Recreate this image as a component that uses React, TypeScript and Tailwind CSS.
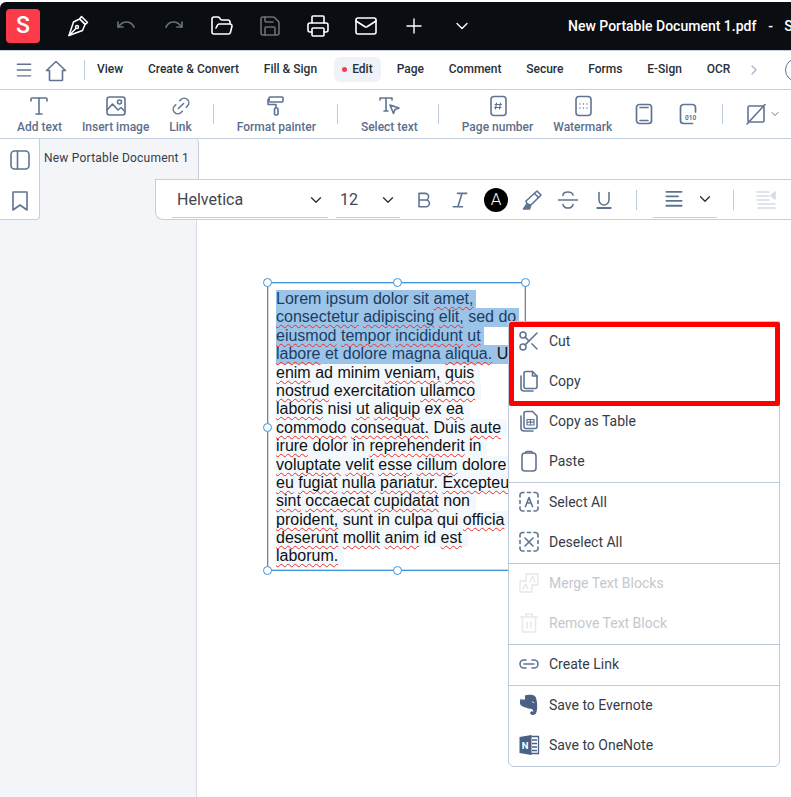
import React from 'react';
import {
  ChevronDown,
  ChevronRight,
  FolderOpen,
  Mail,
  Menu,
  Plus,
  Printer,
  Save,
  Scissors,
  Type,
  Link2,
} from 'lucide-react';

const slate = '#5f7492';

const Svg: React.FC<{ size?: number; color?: string; width?: number; children: React.ReactNode }> = ({
  size = 24,
  color = slate,
  width = 1.6,
  children,
}) => (
  <svg width={size} height={size} viewBox="0 0 24 24" fill="none" stroke={color} strokeWidth={width} strokeLinecap="round" strokeLinejoin="round">
    {children}
  </svg>
);

const NibIcon = () => (
  <Svg color="#ffffff" width={1.5}>
    <path d="M15.500 2.500l6 6-2.200 1.800-5.600-5.600zM13.500 5l5.500 5.500-2.500 6L3 21.500l4.500-13.500z" />
    <path d="M3 21.500l6.800-7" />
    <circle cx="11" cy="13" r="1.500" />
  </Svg>
);

const HomeOutline = () => (
  <Svg width={1.6}>
    <path d="M12 2.500L2.500 11.500h3V21a.5.5 0 0 0 .5.500h12a.5.5 0 0 0 .5-.5v-9.500h3z" />
  </Svg>
);

const UndoIcon = ({ flip }: { flip?: boolean }) => (
  <span className={flip ? '-scale-x-100' : ''}>
    <Svg color="#6b6f76" width={1.7}>
      <path d="M4 8v5h5" />
      <path d="M4.500 13C7 9 10 8 12.500 8c3.500 0 6 2 7.500 5" />
    </Svg>
  </span>
);

const ImageIcon = () => (
  <Svg>
    <rect x="3" y="3" width="18" height="18" rx="2.500" />
    <circle cx="15.500" cy="8" r="2" />
    <path d="M3 16l5.500-6 5.500 6 3-2.500 4 4" />
  </Svg>
);

const RollerIcon = () => (
  <Svg>
    <rect x="5" y="3" width="14" height="5" rx="1" />
    <path d="M5 5.500H4v5h8v3" />
    <rect x="10.500" y="14" width="3.500" height="7" rx="1" />
  </Svg>
);

const SelectTextIcon = () => (
  <Svg>
    <path d="M3 6V4h12v2M9 4v13M7 17h4" />
    <path d="M13 11l9 3-4 1.500-1.500 4z" />
  </Svg>
);

const PageNumberIcon = () => (
  <Svg>
    <rect x="5" y="2.500" width="15" height="19" rx="3" />
    <path d="M10.500 9l-1 6M14.500 9l-1 6M9 10.500h6.500M8.500 13.500h6.500" strokeWidth="1.200" />
  </Svg>
);

const WatermarkIcon = () => (
  <Svg>
    <rect x="5" y="2.500" width="15" height="19" rx="3" />
    <path d="M9 10h.01M12.500 10h.01M16 10h.01M9 14h.01M12.500 14h.01M16 14h.01" strokeWidth="1.400" />
  </Svg>
);

const PhoneIcon = () => (
  <Svg width={1.7}>
    <rect x="4.500" y="2.500" width="15" height="19" rx="3" />
    <path d="M8 5.500h8M8 18.500h8" />
  </Svg>
);

const BinaryIcon = () => (
  <Svg width={1.7}>
    <path d="M15.500 2.500H7.500a3 3 0 0 0-3 3v13a3 3 0 0 0 3 3H16.500M19.500 10V5.500a3 3 0 0 0-3-3" />
    <text x="9" y="18" fontSize="6.500" fontWeight="700" fill={slate} stroke="none" fontFamily="Roboto, sans-serif">010</text>
  </Svg>
);

const NoFillIcon = () => (
  <Svg>
    <rect x="4" y="4" width="16" height="16" rx="1.500" />
    <path d="M21 2.500L3 22" />
  </Svg>
);

const PanelIcon = () => (
  <Svg>
    <rect x="3" y="3" width="18" height="18" rx="3.500" />
    <path d="M9.500 3v18" />
  </Svg>
);

const BookmarkIcon = () => (
  <Svg>
    <path d="M5 3h14v18l-7-5-7 5z" />
  </Svg>
);

const BoldIcon = () => (
  <Svg size={20} width={1.900}>
    <path d="M6 4h7.500a4 4 0 0 1 0 8H6zM6 12h8.500a4 4 0 0 1 0 8H6z" />
  </Svg>
);

const ItalicIcon = () => (
  <Svg size={20} width={1.900}>
    <path d="M9 4h11M4 20h11M14.500 4l-5 16" />
  </Svg>
);

const HighlightIcon = () => (
  <Svg>
    <path d="M17 3l4 4-10 10-4-1-1-3z" />
    <path d="M14.500 5.500l4 4" />
    <path d="M7 16l-3.500 5h6l1-3z" fill={slate} />
  </Svg>
);

const StrikeIcon = () => (
  <Svg>
    <path d="M2.500 12h19" />
    <path d="M17 7c-.5-2-2.500-3-5-3s-5 1-5 3.500M7 16.500C7.500 19 9.500 20 12 20s4.500-1 5-3.500" />
  </Svg>
);

const UnderlineIcon = () => (
  <Svg size={20} width={1.900}>
    <path d="M6 3v9a6 6 0 0 0 12 0V3" />
    <path d="M4 21.500h16" strokeWidth="2.400" />
  </Svg>
);

const AlignIcon = () => (
  <Svg width={2}>
    <path d="M3.500 4h17M3.500 9h13M3.500 14h17M3.500 19.500h17" />
  </Svg>
);

const IndentIcon = () => (
  <Svg color="#d5dbe4" width={1.500}>
    <path d="M3 4h12M3 8h12M3 12h12M4 16h17M4 20h17" />
    <path d="M21 4v7l-4-3.500z" fill="#d5dbe4" />
  </Svg>
);

const CopyIcon = () => (
  <Svg>
    <path d="M9 2.500h6.500L20 7v10.500a2 2 0 0 1-2 2H9a2 2 0 0 1-2-2v-13a2 2 0 0 1 2-2z" />
    <path d="M15.500 2.500V7H20" />
    <path d="M4 7v12a3 3 0 0 0 3 3h9" />
  </Svg>
);

const CopyTableIcon = () => (
  <Svg>
    <path d="M9 2.500h6.500L20 7v10.500a2 2 0 0 1-2 2H9a2 2 0 0 1-2-2v-13a2 2 0 0 1 2-2z" />
    <path d="M4 7v12a3 3 0 0 0 3 3h9" />
    <path d="M10 10.500h7v5.500h-7zM13.500 10.500V16M10 13.200h7" strokeWidth="1.200" />
  </Svg>
);

const PasteIcon = () => (
  <Svg>
    <rect x="5" y="4" width="14" height="18" rx="3" />
    <path d="M8.500 4c0-1 .5-1.500 1.500-1.500h4c1 0 1.500.5 1.500 1.500" />
  </Svg>
);

const DashedBox: React.FC<{ children: React.ReactNode }> = ({ children }) => (
  <Svg>
    <path d="M3 7V5a2.500 2.500 0 0 1 2.500-2.500H7M10.500 2.500h3M17 2.500h1.500A2.500 2.500 0 0 1 21 5v2M21 10.500v3M21 17v1.500a2.500 2.500 0 0 1-2.500 2.500H17M13.500 21h-3M7 21H5.500A2.500 2.500 0 0 1 3 18.500V17M3 13.500v-3" />
    {children}
  </Svg>
);

const MergeIcon = () => (
  <Svg color="#e3e7ec" width={1.300}>
    <path d="M9 3h12v11h-6v7H3V10h6z" />
    <path d="M13 11l2.500-6 2.500 6M6 18l2.500-5 2.500 5" />
  </Svg>
);

const TrashIcon = () => (
  <Svg color="#e6e9ee">
    <path d="M3.500 6h17M9 6V3h6v3M5.500 6v15h13V6M10 11v6M14 11v6" />
  </Svg>
);

const EvernoteIcon = () => (
  <svg width="24" height="24" viewBox="0 0 24 24">
    <path
      fill="#4a6185"
      d="M8 2.500C10 1.500 13 1.500 15.500 2c2.500.5 3.500 2 3.800 4 1.200 4.500 1.200 9.500.2 13-.6 2.200-2.300 3.300-4.300 3-1.700-.3-2.500-1.800-1.800-3 .6-1 2.200-1 2.800 0 .3-1.200-.5-3-2.200-3.200-1.500-.2-3.500 0-5-1.300C7 14.500 6.500 13.500 5 13 3.500 12.500 2.800 11 3 9l.3-3 3.700-.5z"
    />
    <path d="M8 3v3.500H3.500z" fill="#ffffff" />
    <path d="M15 8.500c1 0 2 .5 2.300 1.500-1 0-1.800-.3-2.300-1.500z" fill="#ffffff" />
  </svg>
);

const OneNoteIcon = () => (
  <svg width="24" height="24" viewBox="0 0 24 24">
    <path d="M13 3.500h8.500v17H13z" fill="none" stroke="#4a6185" strokeWidth="1.300" />
    <path d="M15 7h5M15 10.500h5M15 14h5M15 17.500h5" stroke="#4a6185" strokeWidth="1.600" />
    <path d="M2.500 4l12-2v20l-12-2z" fill="#4a6185" />
    <text x="4.800" y="15.500" fontSize="9.500" fontWeight="700" fill="#ffffff" fontFamily="Roboto, sans-serif">N</text>
  </svg>
);

const navItems = ['View', 'Create & Convert', 'Fill & Sign', 'Edit', 'Page', 'Comment', 'Secure', 'Forms', 'E-Sign', 'OCR'];

const ToolButton: React.FC<{ label: string; icon: React.ReactNode }> = ({ label, icon }) => (
  <div className="flex flex-col items-center gap-px">
    <div className="h-6 flex items-center justify-center">{icon}</div>
    <span className="text-xs leading-[16px] font-medium text-[#5c6f8b] whitespace-nowrap">{label}</span>
  </div>
);

const Sep = ({ className = '' }: { className?: string }) => <div className={`w-px h-5 bg-[#bccadb] shrink-0 ${className}`} />;

// words with a ~ get the red spell check line
const docLines: { text: string; sel?: boolean; rest?: string }[] = [
  { text: 'Lorem ipsum dolor sit ~amet,', sel: true },
  { text: '~consectetur ~adipiscing ~elit, sed do', sel: true },
  { text: '~eiusmod ~tempor ~incididunt ~ut', sel: true },
  { text: '~labore et dolore magna ~aliqua. ', sel: true, rest: 'Ut' },
  { text: '~enim ad minim ~veniam, ~quis' },
  { text: '~nostrud exercitation ~ullamco' },
  { text: '~laboris nisi ~ut ~aliquip ex ~ea' },
  { text: '~commodo ~consequat. Duis ~aute' },
  { text: '~irure dolor in ~reprehenderit in' },
  { text: '~voluptate ~velit ~esse ~cillum dolore' },
  { text: '~eu ~fugiat ~nulla ~pariatur. ~Excepteur' },
  { text: '~sint ~occaecat ~cupidatat non' },
  { text: '~proident, sunt in culpa qui ~officia' },
  { text: '~deserunt ~mollit ~anim id ~est' },
  { text: '~laborum.' },
];

const Words: React.FC<{ text: string }> = ({ text }) => (
  <>
    {text.split(' ').map((word, i, all) => (
      <React.Fragment key={i}>
        {word.startsWith('~') ? (
          <span className="underline decoration-wavy decoration-[#ef2f22] decoration-[1.3px] underline-offset-2 [text-decoration-skip-ink:none]">
            {word.slice(1)}
          </span>
        ) : (
          word
        )}
        {i < all.length - 1 ? ' ' : ''}
      </React.Fragment>
    ))}
  </>
);

const Handle = ({ className }: { className: string }) => (
  <span className={`absolute w-[9px] h-[9px] rounded-full bg-white border border-[#3f93d8] ${className}`} />
);

const MenuItem: React.FC<{ label: string; icon: React.ReactNode; disabled?: boolean }> = ({ label, icon, disabled }) => (
  <div className="h-10 flex items-center pl-2 gap-2 pb-[2px]">
    <div className="w-6 h-6 flex items-center justify-center shrink-0">{icon}</div>
    <span className={`text-sm ${disabled ? 'text-[#c4c8ce]' : 'text-[#363c47]'}`}>{label}</span>
  </div>
);

const MenuLine = () => <div className="h-px bg-[#bccadb]" />;

export default function App() {
  return (
    <div className="w-[791px] h-[797px] overflow-hidden bg-white flex flex-col font-['Roboto',sans-serif]">
      {/* title bar */}
      <div className="mt-[2px] h-[48px] shrink-0 bg-[#0a0d12] rounded-tl-md flex items-center">
        <div className="ml-[6px] w-[34px] h-[34px] shrink-0 rounded bg-[#fd3a4a] flex items-center justify-center text-white text-[23px] font-medium">S</div>
        <div className="ml-[14px] flex items-center shrink-0">
          <div className="w-12 flex justify-center"><NibIcon /></div>
          <div className="w-12 flex justify-center"><UndoIcon /></div>
          <div className="w-12 flex justify-center"><UndoIcon flip /></div>
          <div className="w-12 flex justify-center"><FolderOpen size={24} color="#ffffff" strokeWidth={1.6} /></div>
          <div className="w-12 flex justify-center"><Save size={24} color="#6b6f76" strokeWidth={1.6} /></div>
          <div className="w-12 flex justify-center"><Printer size={24} color="#ffffff" strokeWidth={1.6} /></div>
          <div className="w-12 flex justify-center"><Mail size={24} color="#ffffff" strokeWidth={1.6} /></div>
          <div className="w-12 flex justify-center"><Plus size={24} color="#ffffff" strokeWidth={1.4} /></div>
          <div className="w-12 flex justify-center"><ChevronDown size={20} color="#ffffff" strokeWidth={1.6} /></div>
        </div>
        <span className="ml-[82px] shrink-0 text-sm font-medium text-white whitespace-nowrap">New Portable Document 1.pdf</span>
        <span className="ml-[12px] shrink-0 text-sm font-medium text-white">-</span>
        <span className="ml-[11px] shrink-0 text-sm font-medium text-white">S</span>
      </div>

      {/* menu tabs */}
      <div className="h-[40px] shrink-0 border-y border-[#c3cfde] flex items-center">
        <div className="ml-[12px] w-6 flex justify-center shrink-0"><Menu size={20} color={slate} strokeWidth={1.7} /></div>
        <div className="ml-[8px] w-6 flex justify-center shrink-0 pt-[2px]"><HomeOutline /></div>
        <Sep className="ml-[16px]" />
        <div className="ml-[12px] pb-[2px] flex items-center gap-[24.8px] shrink-0">
          {navItems.map(item =>
            item === 'Edit' ? (
              <div key={item} className="-ml-[8px] -mr-[9px] h-[25px] w-[47px] rounded-md bg-[#eff2f7] flex items-center justify-center gap-[5px] text-xs font-medium text-[#283038]">
                <span className="w-[5px] h-[5px] rounded-full bg-[#fd3a4a]" />
                {item}
              </div>
            ) : (
              <span key={item} className="text-xs font-medium text-[#283038] whitespace-nowrap">{item}</span>
            )
          )}
        </div>
        <ChevronRight size={16} color="#aab6c6" strokeWidth={2} className="ml-[16px] shrink-0" />
        <div className="ml-[23px] w-6 h-6 rounded-full border border-[#5f7492] shrink-0" />
      </div>

      {/* tools */}
      <div className="h-[49px] shrink-0 border-b border-[#c3cfde] flex items-center pl-[17px]">
        <div className="flex items-center gap-5">
          <ToolButton label="Add text" icon={<Type size={24} color={slate} strokeWidth={1.6} />} />
          <ToolButton label="Insert image" icon={<ImageIcon />} />
          <ToolButton label="Link" icon={<Link2 size={22} color={slate} strokeWidth={1.6} className="-rotate-45" />} />
        </div>
        <Sep className="ml-[21px] mr-[23px]" />
        <ToolButton label="Format painter" icon={<RollerIcon />} />
        <Sep className="ml-[21px] mr-[23px]" />
        <ToolButton label="Select text" icon={<SelectTextIcon />} />
        <Sep className="ml-[20px] mr-[23px]" />
        <div className="flex items-center gap-5">
          <ToolButton label="Page number" icon={<PageNumberIcon />} />
          <ToolButton label="Watermark" icon={<WatermarkIcon />} />
        </div>
        <div className="ml-[20px] w-6 flex justify-center shrink-0"><PhoneIcon /></div>
        <div className="ml-5 w-6 flex justify-center shrink-0"><BinaryIcon /></div>
        <Sep className="ml-[22px]" />
        <div className="ml-[21px] shrink-0"><NoFillIcon /></div>
        <ChevronDown size={12} color={slate} className="ml-[1px] shrink-0" />
      </div>

      {/* workspace */}
      <div className="relative flex-1 flex min-h-0">
        <div className="w-[197px] shrink-0 bg-[#f3f5f8] border-r border-[#d9dde3] flex items-start">
          <div className="w-10 h-[81px] shrink-0 bg-white border-r border-b border-[#c3cfde] rounded-br flex flex-col items-center pt-[9px] gap-[17px]">
            <PanelIcon />
            <BookmarkIcon />
          </div>
          <div className="w-[159px] shrink-0 -mr-[2px] h-[41px] border-r border-[#c3cfde] rounded-tr bg-[#f3f5f8] pl-[4px] pt-[12px] text-xs leading-[14px] text-[#363c47] tracking-[0.22px] whitespace-nowrap">
            New Portable Document 1
          </div>
        </div>

        {/* text formatting bar */}
        <div className="absolute left-[155px] top-[40px] w-[636px] h-[41px] bg-white border-l border-y border-[#c3cfde] rounded-bl-lg flex items-center pl-[16px]">
          <div className="w-[156px] h-[36px] pt-[2px] border-b border-[#c3cfde] flex items-center justify-between pl-[5px] pr-[3px] text-base text-[#3f4550]">
            Helvetica
            <ChevronDown size={18} color="#2a2f36" strokeWidth={1.7} />
          </div>
          <div className="ml-2 w-[64px] h-[36px] pt-[2px] border-b border-[#c3cfde] flex items-center justify-between pl-[4px] pr-[3px] text-base text-[#3f4550]">
            12
            <ChevronDown size={18} color="#2a2f36" strokeWidth={1.7} />
          </div>
          <div className="ml-[12px] flex items-center gap-[12px] [&>div]:w-6 [&>div]:h-6 [&>div]:flex [&>div]:items-center [&>div]:justify-center">
            <div><BoldIcon /></div>
            <div><ItalicIcon /></div>
            <div className="rounded-full bg-black text-white text-[17px] font-light leading-none">A</div>
            <div><HighlightIcon /></div>
            <div><StrikeIcon /></div>
            <div><UnderlineIcon /></div>
          </div>
          <Sep className="ml-[20px]" />
          <div className="ml-[16px] w-[64px] h-[36px] border-b border-[#c3cfde] flex items-center justify-between pl-[9px] pr-[3px]">
            <span className="block scale-90"><AlignIcon /></span>
            <ChevronDown size={18} color="#2a2f36" strokeWidth={1.7} />
          </div>
          <Sep className="ml-[16px]" />
          <div className="ml-[20px]"><IndentIcon /></div>
        </div>

        {/* page with the text block */}
        <div className="relative flex-1">
          <div className="absolute left-[70px] top-[143px] w-[259px] h-[289px] border border-[#3f93d8] shadow-[inset_0_0_0_1px_#d4d6da] pl-[8px] pt-[7px] font-['Liberation_Sans',Arial,sans-serif] text-base leading-[18.4px] text-[#111]">
            {/* plain blocks: their backgrounds paint before every line's squiggle */}
            {docLines.map((line, i) => (
              <div key={i} className={`w-fit whitespace-pre h-[18.4px] ${line.sel ? 'bg-[#9cc4e8] text-[#1b3d63] pr-[3px]' : 'bg-[#f3f8fd] pr-[6px]'}`}>
                <Words text={line.text} />
                {line.rest && <span className="text-[#111]">{line.rest}</span>}
              </div>
            ))}
            <Handle className="-left-[5px] -top-[5px]" />
            <Handle className="left-[125px] -top-[5px]" />
            <Handle className="-right-[5px] -top-[5px]" />
            <Handle className="-left-[5px] top-[140px]" />
            <Handle className="-left-[5px] -bottom-[5px]" />
            <Handle className="left-[125px] -bottom-[5px]" />
          </div>
        </div>

        {/* context menu */}
        <div className="absolute left-[508px] top-[182px] w-[272px] bg-white border border-[#bccadb] rounded-b-md">
          <MenuItem label="Cut" icon={<Scissors size={24} color={slate} strokeWidth={1.5} />} />
          <MenuItem label="Copy" icon={<CopyIcon />} />
          <MenuItem label="Copy as Table" icon={<CopyTableIcon />} />
          <MenuItem label="Paste" icon={<PasteIcon />} />
          <MenuLine />
          <MenuItem label="Select All" icon={<DashedBox><path d="M8.500 16.500l3.500-9 3.500 9M10 13h4" /></DashedBox>} />
          <MenuItem label="Deselect All" icon={<DashedBox><path d="M8 8l8 8M16 8l-8 8" /></DashedBox>} />
          <MenuLine />
          <MenuItem label="Merge Text Blocks" disabled icon={<MergeIcon />} />
          <MenuItem label="Remove Text Block" disabled icon={<TrashIcon />} />
          <MenuLine />
          <MenuItem label="Create Link" icon={<Svg><path d="M9 8H7a4 4 0 0 0 0 8h2M15 8h2a4 4 0 0 1 0 8h-2M7 12h10" /></Svg>} />
          <MenuLine />
          <MenuItem label="Save to Evernote" icon={<EvernoteIcon />} />
          <MenuItem label="Save to OneNote" icon={<OneNoteIcon />} />
        </div>

        {/* red callout round Cut and Copy */}
        <div className="absolute left-[509px] top-[183px] w-[271px] h-[84px] border-[5px] border-[#ff0000] rounded-[2px] pointer-events-none" />
      </div>
    </div>
  );
}
